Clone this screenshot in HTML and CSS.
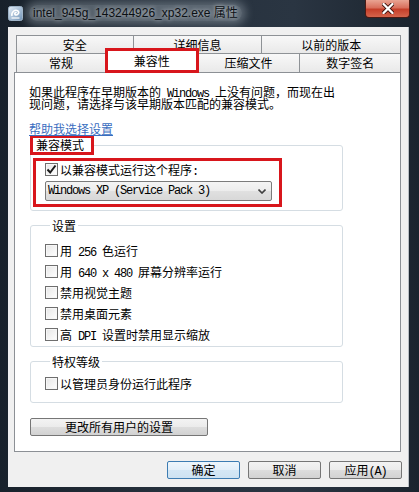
FILE: index.html
```html
<!DOCTYPE html>
<html lang="zh-CN">
<head>
    <meta charset="UTF-8">
    <title>intel_945g_143244926_xp32.exe 属性</title>
    <link rel="stylesheet" href="styles.css">
</head>
<body>
<div class="window">
    <div class="titlebar">
        <svg class="app-icon" width="15" height="15" viewBox="0 0 15 15">
            <defs>
                <linearGradient id="ig" x1="0" y1="0" x2="1" y2="1">
                    <stop offset="0" stop-color="#e4eef8"/>
                    <stop offset="1" stop-color="#6e92b6"/>
                </linearGradient>
            </defs>
            <rect x="0.5" y="0.5" width="14" height="14" rx="2" fill="url(#ig)" stroke="#9fb4c8"/>
            <path d="M4 10 C3 6 7 3 10 5 C12 7 9 10 7 8.5 C6 7.5 7.5 6 8.5 7" fill="none" stroke="#ffffff" stroke-width="1.6"/>
            <path d="M3.5 12 L11.5 12" stroke="#ffffff" stroke-width="1.2"/>
        </svg>
        <span class="title">intel_945g_143244926_xp32.exe 属性</span>
        <div class="close">
            <svg width="12" height="11" viewBox="0 0 12 11">
                <path d="M1.5 1 L10.5 10 M10.5 1 L1.5 10" stroke="#3a0f0a" stroke-width="4" stroke-linecap="round"/>
                <path d="M1.5 1 L10.5 10 M10.5 1 L1.5 10" stroke="#ffffff" stroke-width="2.4" stroke-linecap="round"/>
            </svg>
        </div>
    </div>

    <div class="dialog">
        <div class="tabs">
            <div class="tab-row">
                <div class="tab tab-security">安全</div>
                <div class="tab tab-details">详细信息</div>
                <div class="tab tab-previous">以前的版本</div>
            </div>
            <div class="tab-row tab-row-front">
                <div class="tab tab-general">常规</div>
                <div class="tab tab-compat active">兼容性</div>
                <div class="tab tab-zip">压缩文件</div>
                <div class="tab tab-sign">数字签名</div>
            </div>
        </div>

        <div class="panel">
            <p class="intro">如果此程序在早期版本的<span class="en"> Windows </span>上没有问题，而现在出<br>现问题，请选择与该早期版本匹配的兼容模式。</p>
            <a class="help-link" href="#">帮助我选择设置</a>

            <fieldset class="group group-compat">
                <legend class="mark-legend">兼容模式</legend>
                <div class="mark-box">
                    <label class="check">
                        <span class="box">
                            <svg width="11" height="11" viewBox="0 0 11 11"><path d="M1.5 5.5 L4.2 8.5 L9.5 1.5" fill="none" stroke="#1a1a1a" stroke-width="2"/></svg>
                        </span>
                        <span>以兼容模式运行这个程序<span class="en">:</span></span>
                    </label>
                    <div class="select">
                        <span class="en">Windows XP (Service Pack 3)</span>
                        <svg width="8" height="5" viewBox="0 0 8 5"><path d="M0.5 0.5 L4 4 L7.5 0.5" fill="none" stroke="#404040" stroke-width="1.6"/></svg>
                    </div>
                </div>
            </fieldset>

            <fieldset class="group group-settings">
                <legend>设置</legend>
                <label class="check"><span class="box"></span><span>用<span class="en"> 256 </span>色运行</span></label>
                <label class="check"><span class="box"></span><span>用<span class="en"> 640 x 480 </span>屏幕分辨率运行</span></label>
                <label class="check"><span class="box"></span><span>禁用视觉主题</span></label>
                <label class="check"><span class="box"></span><span>禁用桌面元素</span></label>
                <label class="check"><span class="box"></span><span>高<span class="en"> DPI </span>设置时禁用显示缩放</span></label>
            </fieldset>

            <fieldset class="group group-privilege">
                <legend>特权等级</legend>
                <label class="check"><span class="box"></span><span>以管理员身份运行此程序</span></label>
            </fieldset>

            <button class="btn btn-all-users">更改所有用户的设置</button>
        </div>

        <div class="actions">
            <button class="btn btn-default">确定</button>
            <button class="btn">取消</button>
            <button class="btn">应用<span class="en">(A)</span></button>
        </div>
    </div>
</div>
</body>
</html>
```

FILE: styles.css
```css
* {
    box-sizing: border-box;
}

body {
    margin: 0;
    background-color: #1c2631;
    font-family: "Noto Sans CJK SC", sans-serif;
    font-size: 12px;
    color: #000;
}

/* latin runs: half-width like the system font */
.en {
    font-family: "Liberation Mono", monospace;
    font-size: 12px;
    line-height: 0;
    letter-spacing: -1.2px;
}

.window {
    width: 419px;
    height: 492px;
    display: flex;
    flex-direction: column;
    background: linear-gradient(90deg, #18212b 0%, #26313d 40%, #2a3542 70%, #1b242e 100%);
}

/* title bar */
.titlebar {
    height: 27px;
    display: flex;
    align-items: flex-start;
}

.app-icon {
    margin: 6px 0 0 8px;
}

.title {
    margin: 5px 0 0 6px;
    padding: 0 4px;
    font-family: "Liberation Sans", "Noto Sans CJK SC", sans-serif;
    font-size: 12px;
    line-height: 16px;
    color: #0c1014;
    background: rgba(190, 200, 210, 0.35);
    border-radius: 8px;
    box-shadow: 0 0 8px 4px rgba(190, 200, 210, 0.35);
    text-shadow: 0 0 4px rgba(240, 244, 248, 0.9);
}

.close {
    margin-left: auto;
    margin-right: 9px;
    width: 45px;
    height: 18px;
    display: flex;
    align-items: center;
    justify-content: center;
    border: 1px solid #4a1a14;
    border-top: none;
    border-radius: 0 0 4px 4px;
    background: linear-gradient(#e9a493 0%, #d9705d 45%, #c53f2a 55%, #d5644c 100%);
}

/* dialog body */
.dialog {
    flex: 1;
    margin: 0 10px 5px 8px;
    padding: 8px 7px 0 6px;
    background-color: #f0f0f0;
    border-right: 1px solid #b9bec4;
}

.tabs {
    margin-left: 2px;
}

.tab-row {
    display: flex;
    height: 18px;
}

.tab-row-front {
    height: 19px;
}

.tab {
    border: 1px solid #8e9296;
    border-bottom: none;
    background: linear-gradient(#f8f8f8, #e9e9e9);
    text-align: center;
    line-height: 17px;
    color: #000;
}

.tab + .tab {
    margin-left: -1px;
}

.tab-row-front .tab {
    line-height: 18px;
}

.tab-security { width: 118px; }
.tab-details { width: 130px; }
.tab-previous { width: 140px; }
.tab-general { width: 90px; }
.tab-zip { width: 104px; }
.tab-sign { width: 102px; }

.tab-row-front .tab.active {
    position: relative;
    z-index: 2;
    width: 94px;
    height: 25px;
    margin-top: -5px;
    border: 3px solid #d8161c;
    background: #fff;
    line-height: 19px;
}

.tab-row-front .tab.tab-zip {
    margin-left: -2px;
}

.panel {
    height: 380px;
    border: 1px solid #8c9095;
    background-color: #fff;
    padding: 0 0 0 14px;
    line-height: 13px;
}

.intro {
    margin: 13px 0 0;
    line-height: 12px;
}

.help-link {
    display: block;
    width: fit-content;
    margin-top: 12px;
    line-height: 13px;
    color: #3a6ec0;
    text-decoration: underline;
}

/* group boxes */
.group {
    width: 313px;
    min-width: 0;
    margin: 0 0 0 1px;
    padding: 0;
    border: 1px solid #d5dde3;
    border-radius: 3px;
}

.group legend {
    margin-left: 5px;
    padding: 0 2px;
    line-height: 13px;
}

.group .mark-legend {
    margin-left: -1px;
    padding: 0 7px 0 3px;
    border: 3px solid #d8161c;
    line-height: 14px;
}

.group-compat {
    padding-bottom: 3px;
}

.mark-box {
    width: 249px;
    margin: 3px 0 0 2px;
    padding: 2px 0 3px 9px;
    border: 3px solid #d8161c;
}

.group-settings {
    margin-top: 8px;
    padding: 12px 0 5px 14px;
    display: flex;
    flex-direction: column;
    gap: 8px;
}

.group-privilege {
    margin-top: 8px;
    padding: 9px 0 12px 14px;
}

.check {
    display: flex;
    align-items: center;
    gap: 2px;
    height: 13px;
    line-height: 13px;
}

.box {
    width: 13px;
    height: 13px;
    flex: none;
    display: flex;
    align-items: center;
    justify-content: center;
    border: 1px solid #6e6e6e;
    background: linear-gradient(135deg, #e6e6e6, #ffffff);
    box-shadow: inset 0 0 0 1px #f7f7f7;
}

.select {
    width: 227px;
    height: 20px;
    margin-top: 5px;
    padding: 0 5px 0 2px;
    display: flex;
    align-items: center;
    justify-content: space-between;
    border: 1px solid #7b7b7b;
    border-radius: 2px;
    background: linear-gradient(#f4f4f4 0%, #ececec 50%, #e0e0e0 51%, #d8d8d8 100%);
}

.select .en {
    line-height: 18px;
}

/* buttons */
.btn {
    height: 18px;
    padding: 0;
    font-family: "Noto Sans CJK SC", sans-serif;
    font-size: 12px;
    line-height: 16px;
    color: #000;
    border: 1px solid #767676;
    border-radius: 2px;
    background: linear-gradient(#f3f3f3 0%, #ebebeb 50%, #dddddd 51%, #d2d2d2 100%);
}

.btn-all-users {
    display: block;
    width: 178px;
    margin: 15px 0 0 1px;
}

.actions {
    display: flex;
    justify-content: flex-end;
    gap: 8px;
    margin: 9px -1px 0 0;
}

.actions .btn {
    width: 73px;
}

.actions .btn-default {
    border-color: #3d7cb2;
    background: linear-gradient(#eef6fc 0%, #e2eff9 50%, #d4e7f5 51%, #cde2f2 100%);
}
```
